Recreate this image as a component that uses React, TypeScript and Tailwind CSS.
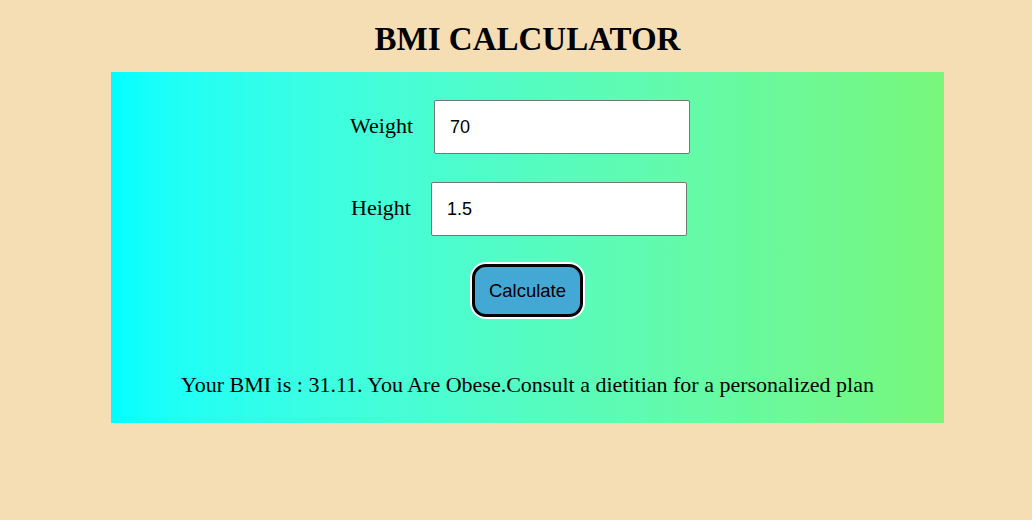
export default function App() {
  return (
    <div className="min-h-[520px] w-full bg-[#f5deb3] pt-[20px]">
      <div className="ml-[111px] w-[833px]">
        <h1 className="text-center font-['Liberation_Serif',serif] text-[33px] font-bold leading-[38px] text-black">
          BMI CALCULATOR
        </h1>

        <div className="mt-[14px] flex h-[351px] flex-col items-center bg-gradient-to-r from-[#00ffff] to-[#78f77a] pt-[28px]">
          <div className="flex items-center gap-[21px] pr-[15px]">
            <label className="mb-[3px] font-['Liberation_Serif',serif] text-[22px] text-black">
              Weight
            </label>
            <input
              defaultValue="70"
              className="h-[54px] w-[256px] rounded-[2px] border border-[#767676] bg-white px-[15px] font-['Liberation_Sans',Arial,sans-serif] text-[18px] text-black outline-none"
            />
          </div>

          <div className="mt-[28px] flex items-center gap-[20px] pr-[17px]">
            <label className="mb-[3px] font-['Liberation_Serif',serif] text-[22px] text-black">
              Height
            </label>
            <input
              defaultValue="1.5"
              className="h-[54px] w-[256px] rounded-[2px] border border-[#767676] bg-white px-[15px] font-['Liberation_Sans',Arial,sans-serif] text-[18px] text-black outline-none"
            />
          </div>

          <button className="mt-[28px] h-[53px] rounded-[14px] border-[3px] border-black bg-[#43a9d4] px-[14px] font-['Liberation_Sans',Arial,sans-serif] text-[18.5px] text-black ring-2 ring-white">
            Calculate
          </button>

          <p className="mt-[55px] font-['Liberation_Serif',serif] text-[22px] leading-[25px] text-black">
            Your BMI is : 31.11. You Are Obese.Consult a dietitian for a personalized plan
          </p>
        </div>
      </div>
    </div>
  );
}
